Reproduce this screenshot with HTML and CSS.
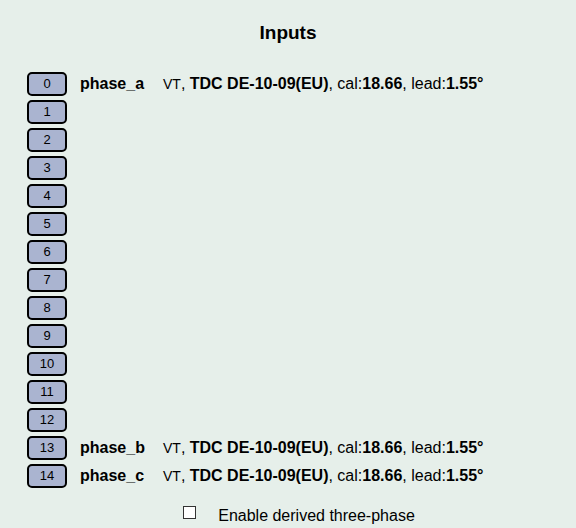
FILE: index.html
```html
<!DOCTYPE html>
<html lang="en">
<head>
<meta charset="utf-8">
<title>Inputs</title>
<link rel="stylesheet" href="styles.css">
</head>
<body>
<main>
<h1>Inputs</h1>
<table class="inputs">
<tbody>
<tr><td class="channel"><button type="button">0</button></td><th scope="row">phase_a</th><td><span class="kind">VT</span>, <b>TDC DE-10-09(EU)</b>, cal:<b>18.66</b>, lead:<b>1.55°</b></td></tr>
<tr><td class="channel"><button type="button">1</button></td><th></th><td></td></tr>
<tr><td class="channel"><button type="button">2</button></td><th></th><td></td></tr>
<tr><td class="channel"><button type="button">3</button></td><th></th><td></td></tr>
<tr><td class="channel"><button type="button">4</button></td><th></th><td></td></tr>
<tr><td class="channel"><button type="button">5</button></td><th></th><td></td></tr>
<tr><td class="channel"><button type="button">6</button></td><th></th><td></td></tr>
<tr><td class="channel"><button type="button">7</button></td><th></th><td></td></tr>
<tr><td class="channel"><button type="button">8</button></td><th></th><td></td></tr>
<tr><td class="channel"><button type="button">9</button></td><th></th><td></td></tr>
<tr><td class="channel"><button type="button">10</button></td><th></th><td></td></tr>
<tr><td class="channel"><button type="button">11</button></td><th></th><td></td></tr>
<tr><td class="channel"><button type="button">12</button></td><th></th><td></td></tr>
<tr><td class="channel"><button type="button">13</button></td><th scope="row">phase_b</th><td><span class="kind">VT</span>, <b>TDC DE-10-09(EU)</b>, cal:<b>18.66</b>, lead:<b>1.55°</b></td></tr>
<tr><td class="channel"><button type="button">14</button></td><th scope="row">phase_c</th><td><span class="kind">VT</span>, <b>TDC DE-10-09(EU)</b>, cal:<b>18.66</b>, lead:<b>1.55°</b></td></tr>
</tbody>
</table>
<div class="derived">
<input type="checkbox" id="derived">
<label for="derived">Enable derived three-phase</label>
</div>
</main>
</body>
</html>
```
FILE: styles.css
```css
body {
  margin: 0;
  background: #e6efea;
  color: #000;
  font: 16px/20px "Liberation Sans", Arial, sans-serif;
}

main {
  padding: 22px 0 0;
}

h1 {
  margin: 0 0 26px;
  font-size: 19px;
  line-height: 22px;
  text-align: center;
}

.inputs {
  margin-left: 27px;
  border-collapse: collapse;
}

.inputs td,
.inputs th {
  height: 28px;
  padding: 0;
  text-align: left;
  white-space: nowrap;
}

.inputs .channel {
  width: 53px;
}

.inputs th {
  width: 83px;
}

.channel button {
  display: block;
  box-sizing: border-box;
  width: 40px;
  height: 24px;
  padding: 0;
  border: 2px solid #000;
  border-radius: 5px;
  background: #aab4d0;
  color: #000;
  font: 13px/14px "Liberation Sans", Arial, sans-serif;
}

.kind {
  font-size: 14px;
}

.derived {
  display: flex;
  justify-content: center;
  gap: 22px;
  margin: 16px 0 0 22px;
}

.derived input {
  appearance: none;
  box-sizing: border-box;
  width: 13px;
  height: 13px;
  margin: 0;
  border: 1px solid #333;
  background: #fff;
}
```
